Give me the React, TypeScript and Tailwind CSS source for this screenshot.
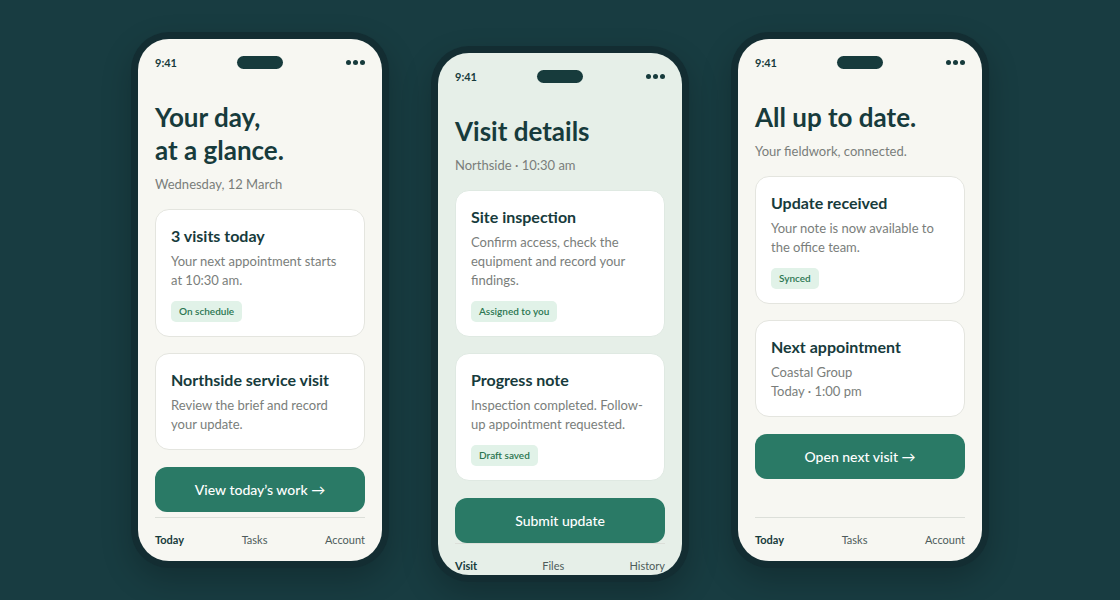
import type { ReactNode } from 'react';

type Card = {
  title: string;
  lines: string[];
  badge?: string;
};

type Screen = {
  heading: string[];
  sub: string;
  cards: Card[];
  action: string;
  tabs: string[];
  tint?: boolean;
};

const screens: Screen[] = [
  {
    heading: ['Your day,', 'at a glance.'],
    sub: 'Wednesday, 12 March',
    cards: [
      { title: '3 visits today', lines: ['Your next appointment starts', 'at 10:30 am.'], badge: 'On schedule' },
      { title: 'Northside service visit', lines: ['Review the brief and record', 'your update.'] },
    ],
    action: 'View today’s work →',
    tabs: ['Today', 'Tasks', 'Account'],
  },
  {
    heading: ['Visit details'],
    sub: 'Northside · 10:30 am',
    cards: [
      {
        title: 'Site inspection',
        lines: ['Confirm access, check the', 'equipment and record your', 'findings.'],
        badge: 'Assigned to you',
      },
      { title: 'Progress note', lines: ['Inspection completed. Follow-', 'up appointment requested.'], badge: 'Draft saved' },
    ],
    action: 'Submit update',
    tabs: ['Visit', 'Files', 'History'],
    tint: true,
  },
  {
    heading: ['All up to date.'],
    sub: 'Your fieldwork, connected.',
    cards: [
      { title: 'Update received', lines: ['Your note is now available to', 'the office team.'], badge: 'Synced' },
      { title: 'Next appointment', lines: ['Coastal Group', 'Today · 1:00 pm'] },
    ],
    action: 'Open next visit →',
    tabs: ['Today', 'Tasks', 'Account'],
  },
];

function StatusBar() {
  return (
    <div className="flex h-[13px] items-center justify-between">
      <span className="w-[40px] text-[11px] font-bold leading-none text-[#173b3c]">9:41</span>
      <span className="h-[13px] w-[46px] rounded-full bg-[#173b3c]" />
      <span className="flex w-[40px] justify-end gap-[2px]">
        <span className="h-[5px] w-[5px] rounded-full bg-[#173b3c]" />
        <span className="h-[5px] w-[5px] rounded-full bg-[#173b3c]" />
        <span className="h-[5px] w-[5px] rounded-full bg-[#173b3c]" />
      </span>
    </div>
  );
}

function InfoCard({ card, tint }: { card: Card; tint?: boolean }) {
  return (
    <div
      className={`shrink-0 rounded-[14px] border bg-white px-[15px] pt-[15px] ${card.badge ? 'pb-[14px]' : 'pb-[15px]'} ${
        tint ? 'border-[#dfe9e2]' : 'border-[#e4e5df]'
      }`}
    >
      <div className="text-[16px] font-bold leading-[22px] text-[#173b3c]">{card.title}</div>
      <div className="mt-[5px] text-[13px] leading-[19px] text-[#7a7e7b]">
        {card.lines.map((l) => (
          <div key={l}>{l}</div>
        ))}
      </div>
      {card.badge && (
        <span className="mt-[11px] inline-flex h-[21px] items-center rounded-[5px] bg-[#e1f2e8] px-2 text-[10px] font-semibold text-[#2b7651]">
          {card.badge}
        </span>
      )}
    </div>
  );
}

function Phone({ screen, className = '' }: { screen: Screen; className?: string }) {
  return (
    <div
      className={`h-[536px] w-[258px] shrink-0 rounded-[38px] bg-[#132d32] p-[7px] shadow-[0_12px_30px_rgba(0,0,0,0.22)] ${className}`}
    >
      <div
        className={`flex h-full flex-col overflow-hidden rounded-[31px] px-[17px] pt-[17px] pb-[14px] ${
          screen.tint ? 'bg-[#e6efe8]' : 'bg-[#f7f7f2]'
        }`}
      >
        <StatusBar />
        <h1 className="mt-8 shrink-0 text-[26px] font-bold leading-[33px] text-[#173b3c]">
          {screen.heading.map((h) => (
            <div key={h}>{h}</div>
          ))}
        </h1>
        <p className="mt-[7px] shrink-0 text-[13px] leading-[20px] text-[#7a7e7b]">{screen.sub}</p>
        <div className="mt-[15px] flex shrink-0 flex-col gap-4">
          {screen.cards.map((c) => (
            <InfoCard key={c.title} card={c} tint={screen.tint} />
          ))}
          <button className="mt-px h-[45px] w-full rounded-[12px] bg-[#2a7a66] text-[14px] font-medium text-white">
            {screen.action}
          </button>
        </div>
        <TabBar tabs={screen.tabs} />
      </div>
    </div>
  );
}

function TabBar({ tabs }: { tabs: string[] }): ReactNode {
  return (
    <div className="mt-auto flex shrink-0 justify-between border-t border-[#dcdfd9] pt-[15px] text-[11px] leading-[14px]">
      {tabs.map((t, i) => (
        <span key={t} className={i === 0 ? 'font-bold text-[#173b3c]' : 'text-[#4d5c5b]'}>
          {t}
        </span>
      ))}
    </div>
  );
}

export default function App() {
  return (
    <div className="flex h-[600px] w-full items-start justify-center gap-[42px] overflow-hidden bg-[#183c41] pt-[32px] font-[Lato,sans-serif]">
      <Phone screen={screens[0]} />
      <Phone screen={screens[1]} className="mt-[14px]" />
      <Phone screen={screens[2]} />
    </div>
  );
}
